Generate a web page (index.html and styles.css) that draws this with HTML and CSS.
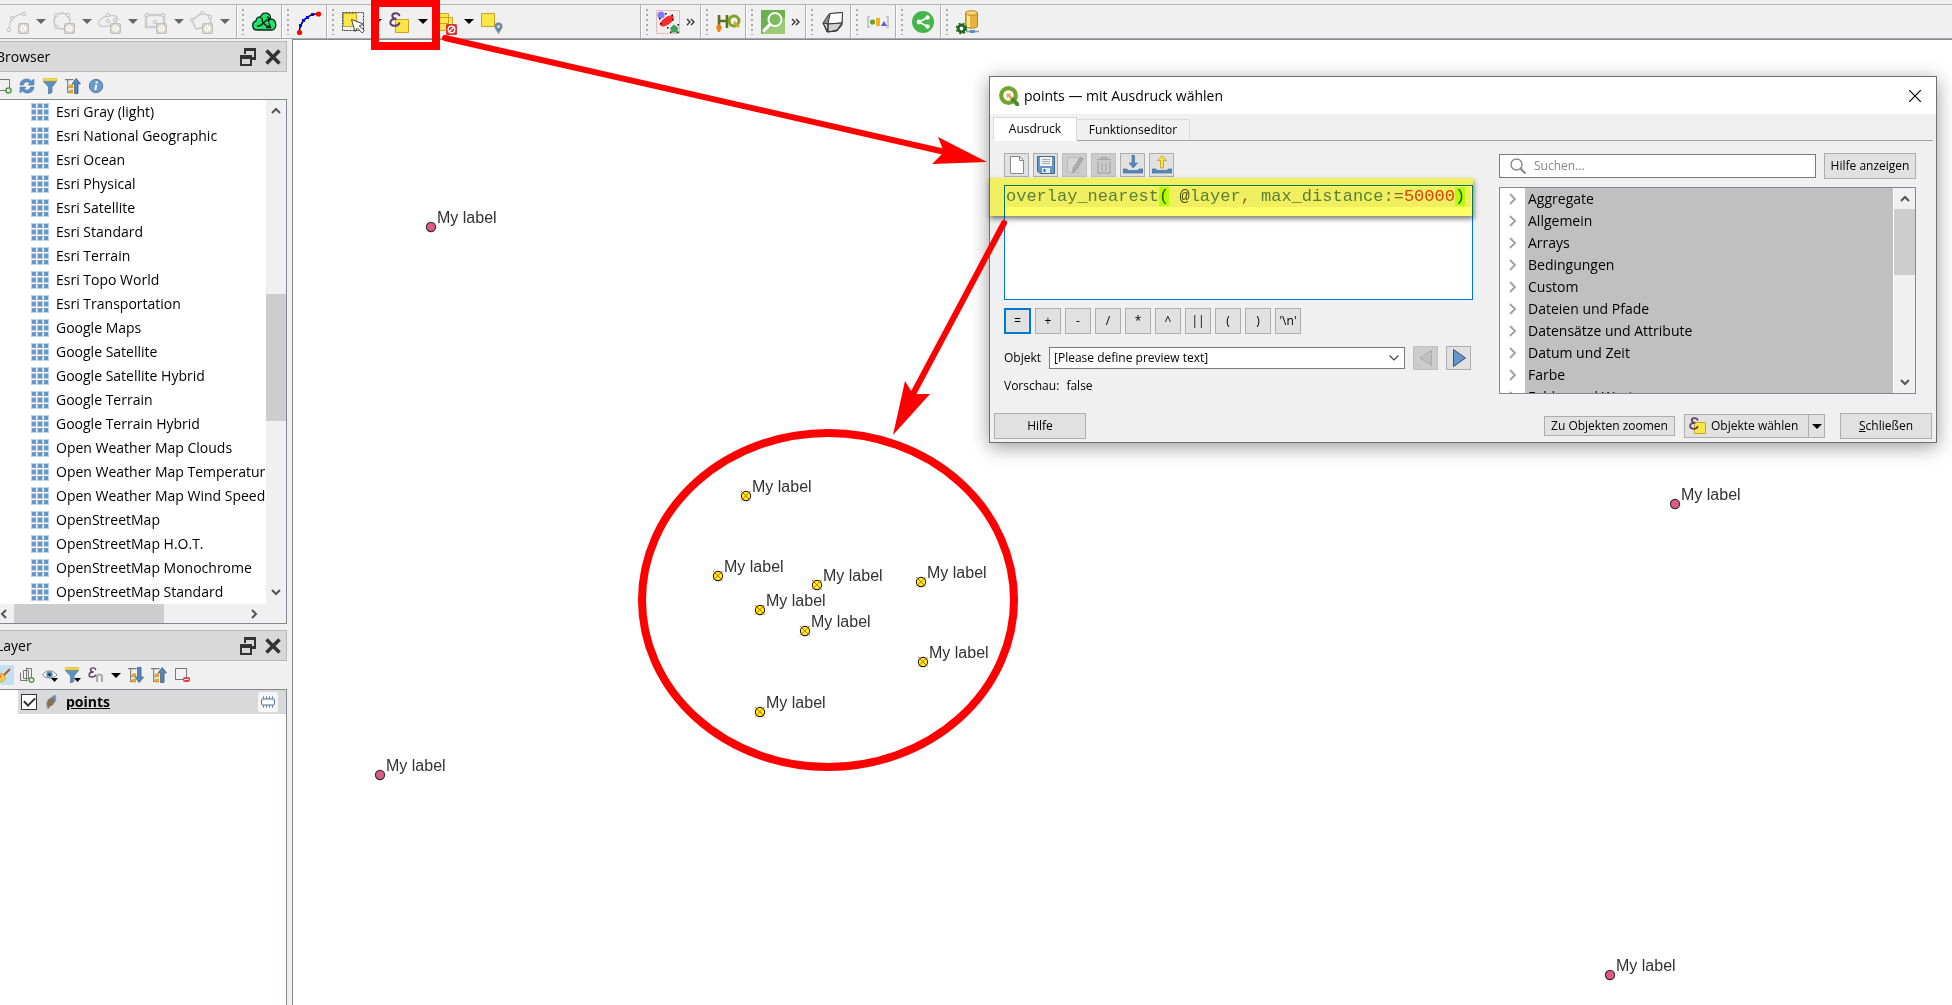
FILE: index.html
```
<!DOCTYPE html>
<html lang="de">
<head>
    <meta charset="UTF-8">
    <meta name="viewport" content="width=device-width, initial-scale=1.0">
    <title>QGIS</title>

    <link rel="stylesheet" href="styles.css">
</head>
<body>
    <!-- shared icons -->
    <svg class="defs" aria-hidden="true">
        <symbol id="tiles" viewBox="0 0 18 18">
            <path fill="#b9cfe6" d="M0 0h5v5H0zM6 0h6v5H6zM13 0h5v5h-5zM0 6h5v6H0zM6 6h6v6H6zM13 6h5v6h-5zM0 13h5v5H0zM6 13h6v5H6zM13 13h5v5h-5z"/>
            <path fill="#6796c8" d="M1 1h4v4H1zM7 1h4v4H7zM13 1h4v4h-4zM1 7h4v4H1zM7 7h4v4H7zM13 7h4v4h-4zM1 13h4v4H1zM7 13h4v4H7zM13 13h4v4h-4z"/>
        </symbol>
        <symbol id="undock" viewBox="0 0 16 18">
            <path fill="#333" fill-rule="evenodd" d="M4 0h12v12h-4V9h2V3H6v3H4zM0 7h12v11H0zm2 4v5h8v-5z"/>
        </symbol>
        <symbol id="cross" viewBox="0 0 16 16">
            <path fill="none" stroke="#333" stroke-width="3.6" d="M1.500 1.500l13 13M14.500 1.500l-13 13"/>
        </symbol>
        <symbol id="up" viewBox="0 0 10 7"><path fill="none" stroke="#555" stroke-width="2" d="M1 6l4-4 4 4"/></symbol>
        <symbol id="down" viewBox="0 0 10 7"><path fill="none" stroke="#555" stroke-width="2" d="M1 1l4 4 4-4"/></symbol>
        <symbol id="left" viewBox="0 0 7 10"><path fill="none" stroke="#555" stroke-width="2" d="M6 1L2 5l4 4"/></symbol>
        <symbol id="right" viewBox="0 0 7 10"><path fill="none" stroke="#555" stroke-width="2" d="M1 1l4 4-4 4"/></symbol>
        <symbol id="twist" viewBox="0 0 8 12"><path fill="none" stroke="#a3a3a3" stroke-width="2" d="M1 1l5 5-5 5"/></symbol>
        <symbol id="star" viewBox="0 0 11 11">
            <rect x=".5" y=".5" width="10" height="10" rx="1" fill="#d2d0c5" stroke="#c0bfb8"/>
            <path stroke="#fff" stroke-width="1.300" d="M5.500 1.500v8M1.500 5.500h8M2.700 2.700l5.600 5.600M8.300 2.700L2.700 8.300"/>
            <circle cx="5.500" cy="5.500" r="1" fill="#d2d0c5"/>
        </symbol>
        <symbol id="epsilon" viewBox="0 0 11 14">
            <path fill="none" stroke="#5d3f68" stroke-width="1.900" stroke-linecap="round" d="M9.500 3C8.500.5 3 .3 3 3.500 3 5.500 5 6.300 7 6.300 4 6.300 1.200 7.300 1.200 9.800c0 4 7 3.800 8.300.7"/>
        </symbol>
        <symbol id="funnel" viewBox="0 0 14 16">
            <path fill="#5f8fc2" stroke="#4873a0" stroke-width=".7" d="M.5 3.500h13L9 9v5.500L5.500 16V9z"/>
            <path fill="#f8df3c" stroke="#c9a91c" stroke-width=".6" d="M.4.400h13.200v2.500H.4z"/>
        </symbol>
        <symbol id="tree-up" viewBox="0 0 15 15">
            <path fill="none" stroke="#777" d="M0 1.500h8M2.500 1v12.500M2 8.500h3M2 13.500h3"/>
            <rect x="4" y="6" width="3.500" height="3.500" fill="#f0a020"/><rect x="4" y="11" width="3.500" height="3.500" fill="#f0a020"/>
            <path fill="#5788bd" stroke="#2f5580" stroke-width=".7" d="M10.500.5l4 5h-2.300v9H9v-9H6.700z"/>
        </symbol>
        <symbol id="tree-down" viewBox="0 0 15 15">
            <path fill="none" stroke="#777" d="M0 1.500h8M2.500 1v12.500M2 8.500h3M2 13.500h3"/>
            <rect x="4" y="6" width="3.500" height="3.500" fill="#f0a020"/><rect x="4" y="11" width="3.500" height="3.500" fill="#f0a020"/>
            <path fill="#5788bd" stroke="#2f5580" stroke-width=".7" d="M10.500 14.500l4-5h-2.300v-9H9v9H6.700z"/>
        </symbol>
        <symbol id="hit" viewBox="0 0 12 12">
            <circle cx="6" cy="6" r="4.600" fill="#ff0" stroke="#222" stroke-width="1.100"/>
            <path stroke="#f5301f" stroke-width=".9" d="M1 1l9.500 9.500M10.500 1L1 10.500"/>
        </symbol>
        <symbol id="miss" viewBox="0 0 12 12">
            <circle cx="6" cy="6" r="4.600" fill="#e15989" stroke="#333" stroke-width="1.200"/>
        </symbol>
    </svg>

    <div class="window">
        <div class="strip"></div>

        <div class="toolbar">
            <div class="group first">
                <button class="tool menu off" aria-label="Kreisbogen"><svg viewBox="0 0 24 24"><path fill="none" stroke="#cdcdcd" stroke-width="1.500" d="M3 20C3 11 8 4 18 4"/><g fill="#eee" stroke="#c3c3c3"><circle cx="3" cy="20" r="1.700"/><circle cx="6" cy="8" r="1.700"/><circle cx="18" cy="4" r="1.700"/></g><use href="#star" x="12" y="13" width="11" height="11"/></svg></button>
                <button class="tool menu off" aria-label="Kreis"><svg viewBox="0 0 24 24"><circle cx="10" cy="11" r="8" fill="none" stroke="#cdcdcd" stroke-width="2"/><g fill="#eee" stroke="#c3c3c3"><circle cx="4" cy="5" r="1.700"/><circle cx="16" cy="5" r="1.700"/><circle cx="4" cy="17" r="1.700"/></g><use href="#star" x="12" y="13" width="11" height="11"/></svg></button>
                <button class="tool menu off" aria-label="Ellipse"><svg viewBox="0 0 24 24"><ellipse cx="10" cy="11" rx="10" ry="5" transform="rotate(-16 10 11)" fill="none" stroke="#cdcdcd" stroke-width="1.500"/><g fill="#eee" stroke="#c3c3c3"><circle cx="10" cy="11" r="1.700"/><circle cx="10" cy="5" r="1.700"/><circle cx="17" cy="10" r="1.700"/></g><use href="#star" x="12" y="13" width="11" height="11"/></svg></button>
                <button class="tool menu off" aria-label="Rechteck"><svg viewBox="0 0 24 24"><path fill="none" stroke="#cdcdcd" stroke-width="2.500" d="M2 5h18v12H2z"/><g fill="#eee" stroke="#c3c3c3"><circle cx="3" cy="5" r="1.700"/><circle cx="19" cy="5" r="1.700"/><circle cx="11" cy="12" r="1.700"/></g><use href="#star" x="12" y="13" width="11" height="11"/></svg></button>
                <button class="tool menu off" aria-label="Polygon"><svg viewBox="0 0 24 24"><path fill="none" stroke="#cdcdcd" stroke-width="1.800" d="M12 3L2 10l4 9 9-2 6-1-1-10z"/><g fill="#eee" stroke="#c3c3c3"><circle cx="12" cy="3" r="1.700"/><circle cx="2" cy="10" r="1.700"/><circle cx="20" cy="7" r="1.700"/></g><use href="#star" x="12" y="13" width="11" height="11"/></svg></button>
            </div>
            <div class="group">
                <button class="tool" aria-label="Cloud"><svg viewBox="0 0 24 24"><path fill="#21e56b" stroke="#10241a" stroke-width="1.300" d="M5 20C-.5 20-.5 12 4 11c0-3 3-5 4.500-3.500C10 1 19 2 18.500 9c6.500-.5 7 11 1.500 11z"/><path fill="none" stroke="#10241a" stroke-width="1.400" d="M5 16c6 1 7-7 13-7M10 8c0 5 3 8 8 9M15 6.500l3 2.500-2 3M14 17.500h4.500L17 13"/></svg></button>
            </div>
            <div class="group">
                <button class="tool" aria-label="Bogen digitalisieren"><svg viewBox="0 0 24 24"><path fill="none" stroke="#000" stroke-width="1.500" d="M2 23C3 12 10 4 21 4"/><g fill="#00f"><path d="M2 14h3v3H2zM5 9h3v3H5zM9 6h3v3H9zM14 3h3v3h-3z"/></g><g fill="red"><circle cx="2.500" cy="22.500" r="2.600"/><circle cx="21.500" cy="4" r="2.600"/></g></svg></button>
            </div>
            <div class="group wide">
                <button class="tool menu" aria-label="Objekte wählen"><svg viewBox="0 0 24 24"><path fill="#fbe64a" stroke="#c8a51e" d="M1.500 3.500h13v13h-13z"/><path fill="none" stroke="#333" stroke-dasharray="2 1" d="M.5 2.500h21v18H.5z"/><path fill="#fff" stroke="#444" d="M9.500 9.500l3.500 12 2.300-3.500 5 5 2-2.500-5-4.500 4-2z"/></svg></button>
                <button class="tool menu" aria-label="Mit Ausdruck wählen"><svg viewBox="0 0 24 24"><path fill="#fbe64a" stroke="#c8a51e" d="M7.500 9.500h13v13h-13z"/><use href="#epsilon" x="1" y="2" width="12" height="15"/></svg></button>
                <button class="tool menu" aria-label="Auswahl aufheben"><svg viewBox="0 0 24 24"><path fill="#fbe64a" stroke="#c8a51e" d="M1.500 3.500h13v10h-13zM5.500 7.500h13v13h-13z"/><rect x="12" y="14" width="11" height="11" rx="1.500" fill="#d92f35"/><circle cx="17.500" cy="19.500" r="3.300" fill="none" stroke="#fff" stroke-width="1.300"/><path stroke="#fff" stroke-width="1.300" d="M15.300 21.700l4.400-4.400"/></svg></button>
                <button class="tool" aria-label="Nach Position wählen"><svg viewBox="0 0 24 24"><path fill="#fbe64a" stroke="#c8a51e" d="M1.500 3.500h13v13h-13z"/><path fill="#6d8ba3" d="M18.500 24c-1.500-3-4-5-4-7.500a4 4 0 0 1 8 0c0 2.500-2.500 4.500-4 7.500z"/><circle cx="18.500" cy="16.500" r="1.500" fill="#dce6ee"/></svg></button>
            </div>
            <div class="group">
                <button class="tool" aria-label="Formen"><svg viewBox="0 0 24 24"><path fill="#f3eded" stroke="#e3bcbc" d="M.5.500h23v23H.5z"/><circle cx="5" cy="5" r="3.600" fill="#7d7df0"/><ellipse cx="11" cy="11" rx="8" ry="3.800" transform="rotate(-35 11 11)" fill="#ff2a2a"/><path fill="#3fa05a" d="M18 14.500l4.500 3.500-1.700 4.500h-5l-1.800-4.500z"/><path fill="#000" d="M9 3h1.500v1.500H9zM15.500 4.500H17V6h-1.500zM4 13h1.500v1.500H4zM11 17h1.500v1.500H11zM16 9h1.500v1.500H16zM21.500 14H23v1.500h-1.500zM21 21.500h1.500V23H21zM14 21.500h1.500V23H14zM3 8h1.500v1.500H3z"/></svg></button>
                <button class="more" aria-label="Mehr"><svg viewBox="0 0 9 8"><path fill="none" stroke="#333" stroke-width="1.400" d="M1 1l3 3-3 3M5 1l3 3-3 3"/></svg></button>
            </div>
            <div class="group">
                <button class="tool" aria-label="HQ"><svg viewBox="0 0 24 24"><path fill="none" stroke="#5b6f1e" stroke-width="2.600" d="M3 5v12M11 5v13M3 11h8"/><circle cx="18" cy="11" r="5" fill="none" stroke="#7ba428" stroke-width="3"/><path stroke="#d6a52c" stroke-width="2.500" d="M18 12l5 5"/><path fill="#f47c12" d="M0 17l3-3 3 3-2 5H2z"/></svg></button>
            </div>
            <div class="group">
                <button class="tool" aria-label="Suche"><svg viewBox="0 0 24 24"><path fill="#6ab14f" d="M0 0h24v24H0z"/><path fill="#9ccb74" d="M0 24L24 8v16z"/><circle cx="14" cy="9.500" r="6.500" fill="#7dbb5d" stroke="#fff" stroke-width="2"/><path stroke="#fff" stroke-width="3.200" stroke-linecap="round" d="M9 14.500l-6 6"/></svg></button>
                <button class="more" aria-label="Mehr"><svg viewBox="0 0 9 8"><path fill="none" stroke="#333" stroke-width="1.400" d="M1 1l3 3-3 3M5 1l3 3-3 3"/></svg></button>
            </div>
            <div class="group">
                <button class="tool" aria-label="3D"><svg viewBox="0 0 24 24"><path fill="#8d8d8d" stroke="#333" d="M2 13L8 4l13-1.500V15l-5 6-10 1z"/><path fill="#fff" stroke="#333" d="M9 3.500l12.500-1L21 13l-14 1z"/><path fill="#d0d0d0" stroke="#333" d="M7 14l14-1-5 7-9 2zM2 13l5 1v8z"/></svg></button>
            </div>
            <div class="group">
                <button class="tool" aria-label="Diagramm"><svg viewBox="0 0 24 24"><path fill="none" stroke="#bbb" stroke-width="1.500" d="M4 7H2v10h2M20 7h2v10h-2"/><circle cx="6.500" cy="12" r="2.600" fill="#5ba52e"/><path fill="#fbaf17" d="M10 8h4v8h-4z"/><path fill="#6b51dd" d="M15 16l3-5 3 5z"/></svg></button>
            </div>
            <div class="group">
                <button class="tool" aria-label="Teilen"><svg viewBox="0 0 24 24"><circle cx="12" cy="12" r="11" fill="#43b649"/><path fill="none" stroke="#fff" stroke-width="1.800" d="M16.500 7.500L8 12l8.500 4.500"/><g fill="#fff"><circle cx="8" cy="12" r="2.400"/><circle cx="16.500" cy="7.500" r="2.200"/><circle cx="16.500" cy="16.500" r="2.200"/></g></svg></button>
            </div>
            <div class="group last">
                <button class="tool" aria-label="Datenbank"><svg viewBox="0 0 24 24"><path fill="#e9b23a" stroke="#b98718" d="M9.500 3v13c0 3 12 3 12 0V3z"/><path fill="#ffe7a0" d="M11 4h3v13h-3z"/><ellipse cx="15.500" cy="3" rx="6" ry="2.300" fill="#f8d67c" stroke="#b98718"/><path stroke="#999" stroke-width="1.500" d="M10 21.500h13"/><path fill="#5c8fc4" d="M14 20h5v3h-5z"/><circle cx="5.500" cy="18.500" r="3.300" fill="#fff" stroke="#1d6a1d" stroke-width="2.800"/><circle cx="5.500" cy="18.500" r="5" fill="none" stroke="#1d6a1d" stroke-dasharray="2 2" stroke-width="1.500"/></svg></button>
            </div>
        </div>

        <div class="main">
            <div class="docks">
                <section class="dock browser">
                    <header class="dock-title">
                        <h2>Browser</h2>
                        <button class="plain" aria-label="Abdocken"><svg width="16" height="18"><use href="#undock"/></svg></button>
                        <button class="plain" aria-label="Schließen"><svg width="16" height="16"><use href="#cross"/></svg></button>
                    </header>
                    <div class="dock-tools">
                        <button class="plain" aria-label="Layer hinzufügen"><svg width="16" height="16" viewBox="0 0 16 16"><path fill="none" stroke="#777" d="M0 1.500h13.500v11H0"/><circle cx="12.500" cy="12.500" r="2.500" fill="#fff" stroke="#4e9a3e" stroke-width="1.500"/></svg></button>
                        <button class="plain" aria-label="Aktualisieren"><svg width="16" height="16" viewBox="0 0 16 16"><path fill="#5c8fc4" stroke="#3f6d9f" stroke-width=".5" d="M1 7C1 1 9-1 12.500 3L15 1v6H9l2-2C8 3 5 4 4.500 7zM15 9c0 6-8 8-11.500 4L1 15V9h6l-2 2c3 2 6 1 6.500-2z"/></svg></button>
                        <button class="plain" aria-label="Filter"><svg width="16" height="16"><use href="#funnel"/></svg></button>
                        <button class="plain" aria-label="Alles zuklappen"><svg width="16" height="16"><use href="#tree-up"/></svg></button>
                        <button class="plain" aria-label="Eigenschaften"><svg width="16" height="16" viewBox="0 0 16 16"><circle cx="8" cy="8" r="6.700" fill="#6c9aca" stroke="#4c7db3"/><path stroke="#fff" stroke-width="2" d="M8.800 3.500l-.3 2M8.300 6.800L7.300 12"/></svg></button>
                    </div>
                    <div class="list">
                        <ul class="sources">
                            <li><svg><use href="#tiles"/></svg>Esri Gray (light)</li>
                            <li><svg><use href="#tiles"/></svg>Esri National Geographic</li>
                            <li><svg><use href="#tiles"/></svg>Esri Ocean</li>
                            <li><svg><use href="#tiles"/></svg>Esri Physical</li>
                            <li><svg><use href="#tiles"/></svg>Esri Satellite</li>
                            <li><svg><use href="#tiles"/></svg>Esri Standard</li>
                            <li><svg><use href="#tiles"/></svg>Esri Terrain</li>
                            <li><svg><use href="#tiles"/></svg>Esri Topo World</li>
                            <li><svg><use href="#tiles"/></svg>Esri Transportation</li>
                            <li><svg><use href="#tiles"/></svg>Google Maps</li>
                            <li><svg><use href="#tiles"/></svg>Google Satellite</li>
                            <li><svg><use href="#tiles"/></svg>Google Satellite Hybrid</li>
                            <li><svg><use href="#tiles"/></svg>Google Terrain</li>
                            <li><svg><use href="#tiles"/></svg>Google Terrain Hybrid</li>
                            <li><svg><use href="#tiles"/></svg>Open Weather Map Clouds</li>
                            <li><svg><use href="#tiles"/></svg>Open Weather Map Temperature</li>
                            <li><svg><use href="#tiles"/></svg>Open Weather Map Wind Speed</li>
                            <li><svg><use href="#tiles"/></svg>OpenStreetMap</li>
                            <li><svg><use href="#tiles"/></svg>OpenStreetMap H.O.T.</li>
                            <li><svg><use href="#tiles"/></svg>OpenStreetMap Monochrome</li>
                            <li><svg><use href="#tiles"/></svg>OpenStreetMap Standard</li>
                        </ul>
                        <div class="vscroll">
                            <svg width="10" height="7"><use href="#up"/></svg>
                            <div class="track"><div class="thumb"></div></div>
                            <svg width="10" height="7"><use href="#down"/></svg>
                        </div>
                        <div class="hscroll">
                            <svg width="7" height="10"><use href="#left"/></svg>
                            <div class="track"><div class="thumb"></div></div>
                            <svg width="7" height="10"><use href="#right"/></svg>
                        </div>
                    </div>
                </section>

                <section class="dock layers">
                    <header class="dock-title">
                        <h2>Layer</h2>
                        <button class="plain" aria-label="Abdocken"><svg width="16" height="18"><use href="#undock"/></svg></button>
                        <button class="plain" aria-label="Schließen"><svg width="16" height="16"><use href="#cross"/></svg></button>
                    </header>
                    <div class="dock-tools">
                        <button class="plain on" aria-label="Layergestaltung"><svg width="16" height="16" viewBox="0 0 16 16"><path fill="#f7c948" stroke="#c3922a" stroke-width=".6" d="M1 8l5-2 4 5-3 4-5-1z"/><path fill="#e64b3c" d="M0 8l4-1 1 3-4 2z"/><path stroke="#b5562d" stroke-width="2" d="M8 8l6-6"/></svg></button>
                        <button class="plain" aria-label="Gruppe hinzufügen"><svg width="16" height="16" viewBox="0 0 16 16"><path fill="none" stroke="#777" d="M1.500 5.500v8h7M4.500 3.500h5v8h-5zM7.500 1.500h5v9M7.500.500v14"/><circle cx="12.500" cy="13" r="2.300" fill="#fff" stroke="#4e9a3e" stroke-width="1.500"/></svg></button>
                        <button class="plain" aria-label="Sichtbarkeit"><svg width="16" height="16" viewBox="0 0 16 16"><path fill="#fff" stroke="#888" d="M.5 8C4 2.500 11 2.500 15 8c-4 4-11 4-14.500 0z"/><circle cx="7.500" cy="7.500" r="3.300" fill="#5c8fc4"/><circle cx="7.500" cy="7.500" r="1.300" fill="#222"/><path d="M9 11h7l-3.500 4z"/></svg></button>
                        <button class="plain" aria-label="Legende filtern"><svg width="16" height="16" viewBox="0 0 16 16"><use href="#funnel" width="14" height="16"/><path d="M9 11h7l-3.500 4z"/></svg></button>
                        <button class="plain" aria-label="Mit Ausdruck filtern"><svg width="16" height="16" viewBox="0 0 16 16"><use href="#epsilon" width="9" height="11"/><path fill="none" stroke="#aaa" stroke-width="2" d="M9 15V9c0-2 5-2 5 0v6"/></svg></button>
                        <span class="caret"></span>
                        <button class="plain" aria-label="Alles aufklappen"><svg width="16" height="16"><use href="#tree-down"/></svg></button>
                        <button class="plain" aria-label="Alles zuklappen"><svg width="16" height="16"><use href="#tree-up"/></svg></button>
                        <button class="plain" aria-label="Layer entfernen"><svg width="16" height="16" viewBox="0 0 16 16"><path fill="#f3f3f3" stroke="#777" d="M1.500 1.500h11v11h-11z"/><rect x="9" y="10" width="7" height="5" rx="2" fill="#ef3e42"/><path stroke="#fff" d="M10.500 12.500h4"/></svg></button>
                    </div>
                    <div class="layer-list">
                        <div class="layer">
                            <input type="checkbox" id="layer-points" checked>
                            <svg class="blob" viewBox="0 0 14 16"><path fill="#6684a8" stroke="#8a97a8" d="M11 1c2 4 0 9-4 10l-3 4C2 10 2 6 7 4z"/><path fill="#8c6f4a" d="M4 6l6-1-1 6-5 2z"/></svg>
                            <label for="layer-points">points</label>
                            <span class="memory"><svg viewBox="0 0 14 12"><rect x=".6" y="3" width="12.800" height="6" rx="1" fill="#fff" stroke="#4d6f93"/><path stroke="#4d6f93" d="M2.500.5v2M5.500.5v2M8.500.5v2M11.500.5v2M2.500 9.500v2M5.500 9.500v2M8.500 9.500v2M11.500 9.500v2"/></svg></span>
                        </div>
                    </div>
                </section>
            </div>

            <div class="map">
                <div class="point" style="left:138px;top:187px"><svg><use href="#miss"/></svg><span>My label</span></div>
                <div class="point" style="left:1382px;top:464px"><svg><use href="#miss"/></svg><span>My label</span></div>
                <div class="point" style="left:87px;top:735px"><svg><use href="#miss"/></svg><span>My label</span></div>
                <div class="point" style="left:1317px;top:935px"><svg><use href="#miss"/></svg><span>My label</span></div>
                <div class="point" style="left:453px;top:456px"><svg><use href="#hit"/></svg><span>My label</span></div>
                <div class="point" style="left:425px;top:536px"><svg><use href="#hit"/></svg><span>My label</span></div>
                <div class="point" style="left:524px;top:545px"><svg><use href="#hit"/></svg><span>My label</span></div>
                <div class="point" style="left:628px;top:542px"><svg><use href="#hit"/></svg><span>My label</span></div>
                <div class="point" style="left:467px;top:570px"><svg><use href="#hit"/></svg><span>My label</span></div>
                <div class="point" style="left:512px;top:591px"><svg><use href="#hit"/></svg><span>My label</span></div>
                <div class="point" style="left:630px;top:622px"><svg><use href="#hit"/></svg><span>My label</span></div>
                <div class="point" style="left:467px;top:672px"><svg><use href="#hit"/></svg><span>My label</span></div>
            </div>
        </div>

        <div class="dialog" role="dialog" aria-labelledby="dialog-title">
            <header class="titlebar">
                <svg class="logo" viewBox="0 0 20 20"><circle cx="9.500" cy="9.500" r="7.300" fill="none" stroke="#72a52b" stroke-width="4.200"/><path fill="#4f8a2a" d="M11 13l3-2 6 6v3h-3z"/><path fill="#f0a040" d="M7.500 7.500h4.500l-1 1.500 2.500 2.500-1.700 1.700L9.300 10.700l-1.300 1.300z"/></svg>
                <h1 id="dialog-title">points — mit Ausdruck wählen</h1>
                <button class="plain" aria-label="Schließen"><svg width="12" height="12" viewBox="0 0 12 12"><path stroke="#000" stroke-width="1.200" d="M0 0l12 12M12 0L0 12"/></svg></button>
            </header>

            <div class="tabs" role="tablist">
                <button class="tab active" role="tab" aria-selected="true">Ausdruck</button>
                <button class="tab" role="tab" aria-selected="false">Funktionseditor</button>
            </div>

            <div class="content">
                <div class="expression">
                    <div class="file-tools">
                        <button class="square" aria-label="Neu"><svg viewBox="0 0 20 20"><path fill="#fff" stroke="#888" d="M3.500 1.500h9l4 4v13h-13z"/><path fill="none" stroke="#888" d="M12.500 1.500v4h4"/></svg></button>
                        <button class="square" aria-label="Speichern"><svg viewBox="0 0 20 20"><path fill="#6796c8" stroke="#44678c" d="M1.500 1.500h17v17H4l-2.500-2.500z"/><path fill="#f2f2f2" d="M4 2h12v9H4z"/><path stroke="#aaa" d="M6 4.500h8M6 6.500h8M6 8.500h8"/><path fill="#e8eef5" d="M6 13h8v5H6z"/><path fill="#44678c" d="M7.500 14h2v3h-2z"/></svg></button>
                        <button class="square" aria-label="Bearbeiten" disabled><svg viewBox="0 0 20 20"><path fill="#d5d5d5" stroke="#bbb" d="M2.500 2.500h11v15h-11z"/><path fill="#b0b0b0" stroke="#999" d="M15.500 2.500l2.500 1.500-7 11-3 2.500v-4z"/></svg></button>
                        <button class="square" aria-label="Löschen" disabled><svg viewBox="0 0 20 20"><path fill="none" stroke="#aaa" stroke-width="1.500" d="M4 6.500v11.500h12V6.500M8 8v8M12 8v8M3 4.500h14M7.500 4V2.500h5V4"/></svg></button>
                        <button class="square" aria-label="Importieren"><svg viewBox="0 0 20 20"><path fill="#5788bd" stroke="#44678c" stroke-width=".6" d="M9 0h2.500v8h3L10.200 13 6 8h3z"/><path fill="#5788bd" stroke="#44678c" stroke-width=".6" d="M0 14h4l1 1.500h10l1-1.500h4v4H0z"/></svg></button>
                        <button class="square" aria-label="Exportieren"><svg viewBox="0 0 20 20"><path fill="#fbe04a" stroke="#c39d1c" stroke-width=".8" d="M8.500 13h3V5.500h3L10 .7 5.500 5.500h3z"/><path fill="#5788bd" stroke="#44678c" stroke-width=".6" d="M0 14h4l1 1.500h10l1-1.500h4v4H0z"/></svg></button>
                    </div>
                    <div class="editor" contenteditable="true" role="textbox" aria-label="Ausdruck" spellcheck="false"><div class="line"><span class="fn">overlay_nearest</span><span class="brace">(</span> <span class="at">@</span><span class="fn">layer</span><span class="op">,</span> <span class="fn">max_distance</span><span class="op">:=</span><span class="num">50000</span><span class="brace">)</span></div></div>
                    <div class="operators">
                        <button class="focus">=</button>
                        <button>+</button>
                        <button>-</button>
                        <button>/</button>
                        <button>*</button>
                        <button>^</button>
                        <button>||</button>
                        <button>(</button>
                        <button>)</button>
                        <button>'\n'</button>
                    </div>
                    <div class="preview">
                        <label for="feature">Objekt</label>
                        <div class="combo">
                            <select id="feature"><option>[Please define preview text]</option></select>
                            <svg viewBox="0 0 10 6"><path fill="none" stroke="#444" stroke-width="1.200" d="M.5.500L5 5 9.500.5"/></svg>
                        </div>
                        <button class="square" aria-label="Vorheriges" disabled><svg viewBox="0 0 20 20"><path fill="#c0c0c0" stroke="#aaa" d="M15.500 2.500v15L4 10z"/></svg></button>
                        <button class="square" aria-label="Nächstes"><svg viewBox="0 0 20 20"><path fill="#6796c8" stroke="#30527c" d="M4.500 1.500v17L16.500 10z"/></svg></button>
                    </div>
                    <p class="result">Vorschau: <span>false</span></p>
                </div>

                <div class="functions">
                    <div class="find">
                        <div class="search">
                            <svg viewBox="0 0 16 16"><circle cx="6.500" cy="6.500" r="5.500" fill="none" stroke="#888" stroke-width="1.400"/><path stroke="#888" stroke-width="2.200" d="M10.500 10.500l5 5"/></svg>
                            <input type="text" placeholder="Suchen..." aria-label="Suchen">
                        </div>
                        <button class="push">Hilfe anzeigen</button>
                    </div>
                    <div class="tree">
                        <ul>
                            <li><svg><use href="#twist"/></svg>Aggregate</li>
                            <li><svg><use href="#twist"/></svg>Allgemein</li>
                            <li><svg><use href="#twist"/></svg>Arrays</li>
                            <li><svg><use href="#twist"/></svg>Bedingungen</li>
                            <li><svg><use href="#twist"/></svg>Custom</li>
                            <li><svg><use href="#twist"/></svg>Dateien und Pfade</li>
                            <li><svg><use href="#twist"/></svg>Datensätze und Attribute</li>
                            <li><svg><use href="#twist"/></svg>Datum und Zeit</li>
                            <li><svg><use href="#twist"/></svg>Farbe</li>
                            <li><svg><use href="#twist"/></svg>Felder und Werte</li>
                        </ul>
                        <div class="vscroll">
                            <svg width="10" height="7"><use href="#up"/></svg>
                            <div class="track"><div class="thumb"></div></div>
                            <svg width="10" height="7"><use href="#down"/></svg>
                        </div>
                    </div>
                </div>
            </div>

            <footer class="actions">
                <button class="push wide">Hilfe</button>
                <span class="spacer"></span>
                <button class="push small">Zu Objekten zoomen</button>
                <div class="split">
                    <button class="split-main"><svg viewBox="0 0 18 18"><path fill="#fbe64a" stroke="#c8a51e" d="M5.500 5.500h11v11h-11z"/><use href="#epsilon" x="0" y="0" width="10" height="13"/></svg>Objekte wählen</button>
                    <button class="split-menu" aria-label="Weitere"><span class="caret"></span></button>
                </div>
                <button class="push wide"><u>S</u>chließen</button>
            </footer>

            <div class="marker"></div>
        </div>

        <!-- red annotations -->
        <svg class="notes" aria-hidden="true">
            <rect x="375" y="3" width="61" height="43" fill="none" stroke="red" stroke-width="8"/>
            <g fill="none" stroke="red" stroke-width="6" stroke-linecap="round">
                <path d="M445 38l500 114"/>
                <path d="M1004 223l-91 171"/>
            </g>
            <path fill="red" d="M987 162l-49-25 6 15-12 12z"/>
            <path fill="red" d="M893 435l12-54 8 13 17 0z"/>
            <ellipse cx="828" cy="600" rx="186" ry="167" fill="none" stroke="red" stroke-width="8"/>
        </svg>
    </div>
</body>
</html>
```
FILE: styles.css
```
*{
    margin: 0;
    padding: 0;
    box-sizing: border-box;
}

body{
    background: #f0f0f0;
    color: #000;
    font-family: 'Open Sans', 'Noto Sans', sans-serif;
    font-size: 14px;
    line-height: 18px;
}

button, input, select{
    font: inherit;
    color: inherit;
}

button{
    border: 0;
    background: none;
}

svg{
    display: block;
    flex: none;
}

ul{
    list-style: none;
}

.defs{
    position: absolute;
    width: 0;
    height: 0;
}

.window{
    position: relative;
    display: flex;
    flex-direction: column;
    height: 100vh;
    overflow: hidden;
}

/* toolbar */
.strip{
    flex: none;
    height: 5px;
    border-bottom: 1px solid #b4b4b4;
}

.toolbar{
    flex: none;
    display: flex;
    height: 34px;
    border-bottom: 1px solid #a8a8a8;
}

.group{
    display: flex;
    align-items: center;
    padding: 0 5px 0 4px;
    border-left: 1px solid #fff;
    border-right: 1px solid #b0b0b0;
}

.group::before{
    content: "";
    width: 3px;
    height: 26px;
    margin-right: 7px;
    background: radial-gradient(circle at 1px 1px, #aaa 1px, transparent 1px) 0 0 / 3px 5px;
}

.group.first{
    padding: 0 0 0 6px;
    border-left: 0;
}

.group.first::before{
    display: none;
}

.group.wide{
    width: 314px;
}

.group.last{
    border-right: 0;
}

.tool{
    display: flex;
    align-items: center;
    width: 24px;
}

.tool svg{
    width: 24px;
    height: 24px;
    overflow: visible;
}

.tool.menu{
    width: 46px;
}

.tool.menu::after, .caret{
    content: "";
    border: 5px solid transparent;
    border-top-color: #000;
    border-bottom: 0;
}

.tool.menu::after{
    margin-left: 6px;
}

.tool.off::after{
    border-top-color: #666;
}

.more svg{
    width: 9px;
    height: 8px;
    margin-left: 6px;
}

/* docks */
.main{
    flex: 1;
    display: flex;
    min-height: 0;
}

.docks{
    flex: none;
    display: flex;
    flex-direction: column;
    gap: 6px;
    width: 292px;
    padding: 2px 5px 0 0;
}

.dock{
    display: flex;
    flex-direction: column;
}

.layers{
    flex: 1;
}

.dock-title{
    display: flex;
    align-items: center;
    gap: 9px;
    height: 31px;
    padding: 0 5px 0 0;
    background: #d9d9d9;
    border: 1px solid #b8b8b8;
    border-left: 0;
}

.dock-title h2{
    flex: 1;
    margin-left: -4px;
    font-size: 14px;
    font-weight: 400;
}

.dock-tools{
    display: flex;
    align-items: center;
    gap: 7px;
    height: 28px;
    margin-left: -4px;
}

.browser .dock-tools{
    height: 27px;
}

.plain.on{
    background: #c4e0f5;
    outline: 2px solid #c4e0f5;
}

.list{
    display: grid;
    grid-template-columns: 1fr 20px;
    background: #fff;
    border: 1px solid #828790;
    border-left: 0;
}

.sources{
    height: 504px;
    overflow: hidden;
}

.sources li{
    display: flex;
    align-items: center;
    gap: 7px;
    height: 24px;
    padding-left: 31px;
    white-space: nowrap;
}

.sources svg{
    width: 18px;
    height: 18px;
}

.vscroll{
    display: flex;
    flex-direction: column;
    align-items: center;
    padding: 7px 0;
    background: #f0f0f0;
}

.hscroll{
    display: flex;
    align-items: center;
    justify-content: space-between;
    height: 19px;
    padding: 0 8px 0 0;
    background: #f0f0f0;
}

.list .vscroll{
    grid-row: 1 / 3;
    grid-column: 2;
    padding-bottom: 27px;
}

.track{
    flex: 1;
    display: flex;
    width: 100%;
}

.vscroll .track{
    flex-direction: column;
    margin: 7px 0;
}

.hscroll .track{
    height: 100%;
    margin: 0 7px;
}

.thumb{
    background: #cdcdcd;
}

.list .vscroll .thumb{
    height: 127px;
    margin-top: 173px;
}

.hscroll .thumb{
    width: 150px;
}

.layer-list{
    flex: 1;
    background: #fff;
    border: 1px solid #828790;
    border-width: 1px 1px 0 0;
}

.layer{
    display: flex;
    align-items: center;
    height: 24px;
    margin-left: 18px;
    padding: 0 8px 0 3px;
    background: #d9d9d9;
}

.layer input{
    appearance: none;
    display: flex;
    justify-content: center;
    width: 16px;
    height: 16px;
    background: #fff;
    border: 1px solid #333;
}

.layer input:checked::after{
    content: "";
    width: 5px;
    height: 9px;
    border: solid #333;
    border-width: 0 2px 2px 0;
    transform: rotate(45deg);
}

.blob{
    width: 14px;
    height: 16px;
    margin: 0 8px 0 7px;
}

.layer label{
    flex: 1;
    font-weight: 700;
    text-decoration: underline;
}

.memory{
    display: flex;
    align-items: center;
    justify-content: center;
    width: 20px;
    height: 20px;
    border-radius: 2px;
    background: #f5f5f5;
}

.memory svg{
    width: 14px;
    height: 12px;
}

/* map */
.map{
    position: relative;
    flex: 1;
    background: #fff;
    border: 1px solid #828790;
    border-width: 1px 0 0 1px;
}

.point{
    position: absolute;
    display: flex;
    align-items: flex-end;
    height: 24px;
    margin: -18px 0 0 -6px;
    color: #323232;
    font-family: 'Liberation Sans', Arial, sans-serif;
    font-size: 16px;
    white-space: nowrap;
}

.point svg{
    width: 12px;
    height: 12px;
}

.point span{
    padding-bottom: 6px;
}

.notes{
    position: absolute;
    inset: 0;
    width: 100%;
    height: 100%;
    pointer-events: none;
}

/* expression dialog */
.dialog{
    position: absolute;
    top: 76px;
    right: 15px;
    width: 948px;
    background: #f0f0f0;
    border: 1px solid #6e6e6e;
    box-shadow: 0 4px 18px rgba(0, 0, 0, 0.4);
    font-size: 12px;
}

.titlebar{
    display: flex;
    align-items: center;
    gap: 5px;
    height: 37px;
    padding: 0 15px 0 9px;
    background: #fff;
}

.logo{
    width: 20px;
    height: 20px;
}

.titlebar h1{
    flex: 1;
    font-size: 14px;
    font-weight: 400;
}

.tabs{
    display: flex;
    align-items: flex-end;
    height: 27px;
    margin: 0 3px;
    box-shadow: inset 0 -1px #a0a0a0;
}

.tab{
    width: 113px;
    height: 22px;
    border: 1px solid #d9d9d9;
    border-left: 0;
    border-bottom-color: #a0a0a0;
}

.tab.active{
    width: 84px;
    height: 24px;
    background: #fff;
    border: 1px solid #d9d9d9;
    border-bottom-color: #fff;
}

.content{
    display: grid;
    grid-template-columns: 469fr 417fr;
    gap: 26px;
    padding: 12px 20px 0 14px;
}

.file-tools{
    display: flex;
    gap: 4px;
}

.square{
    display: flex;
    align-items: center;
    justify-content: center;
    width: 25px;
    height: 24px;
    background: #e1e1e1;
    border: 1px solid #adadad;
}

.square:disabled{
    background: #cccccc;
    border-color: #bfbfbf;
}

.square svg{
    width: 20px;
    height: 20px;
}

.editor{
    height: 115px;
    margin-top: 8px;
    padding: 1px;
    background: #fff;
    border: 1px solid #0078d7;
    outline: 0;
    font-family: 'Liberation Mono', 'Courier New', monospace;
    font-size: 17px;
    line-height: 20px;
    white-space: pre;
}

.line{
    background: #efefef;
}

.fn{ color: #5c7f84; }
.at{ color: #4a4a20; }
.op{ color: #8a6a4a; }
.num{ color: #d8402c; }

.brace{
    background: #b4ff00;
    color: #2a5a20;
}

.operators{
    display: flex;
    gap: 4px;
    margin: 8px 0 12px;
}

.operators button{
    width: 26px;
    height: 26px;
    background: #e1e1e1;
    border: 1px solid #adadad;
}

.operators .focus{
    width: 27px;
    border: 2px solid #0078d7;
}

.preview{
    display: flex;
    align-items: center;
    gap: 8px;
    padding-right: 2px;
}

.combo{
    position: relative;
    flex: 1;
}

.combo select{
    appearance: none;
    display: block;
    width: 100%;
    height: 22px;
    padding: 0 4px;
    background: #fff;
    border: 1px solid #7a7a7a;
    border-radius: 0;
}

.combo svg{
    position: absolute;
    top: 8px;
    right: 6px;
    width: 10px;
    height: 6px;
}

.result{
    margin-top: 8px;
    line-height: 16px;
}

.result span{
    margin-left: 4px;
}

.functions{
    display: flex;
    flex-direction: column;
    gap: 8px;
}

.find{
    display: flex;
    align-items: center;
    gap: 8px;
}

.search{
    flex: 1;
    display: flex;
    align-items: center;
    gap: 8px;
    height: 24px;
    padding: 0 10px;
    background: #fff;
    border: 1px solid #7a7a7a;
}

.search svg{
    width: 16px;
    height: 16px;
}

.search input{
    flex: 1;
    border: 0;
    outline: 0;
    background: none;
}

.search input::placeholder{
    color: #858585;
}

.push{
    height: 26px;
    min-width: 92px;
    background: #e1e1e1;
    border: 1px solid #adadad;
}

.tree{
    flex: 1 1 0;
    display: flex;
    min-height: 0;
    overflow: hidden;
    border: 1px solid #828790;
    background: #fff;
    font-size: 14px;
}

.tree ul{
    flex: 1;
    height: 221px;
    background: linear-gradient(to right, #fff 25px, #c0c0c0 25px);
}

.tree li{
    display: flex;
    align-items: center;
    gap: 11px;
    height: 22px;
    padding-left: 9px;
}

.tree li svg{
    width: 8px;
    height: 12px;
}

.tree .vscroll{
    width: 22px;
    border-left: 1px solid #fff;
}

.tree .thumb{
    height: 66px;
}

.actions{
    display: flex;
    align-items: center;
    padding: 19px 4px 3px;
}

.spacer{
    flex: 1;
}

.push.small{
    height: 20px;
    min-width: 131px;
    line-height: 16px;
}

.split{
    display: flex;
    height: 24px;
    margin: 0 15px 0 9px;
    background: #e1e1e1;
    border: 1px solid #adadad;
}

.split-main{
    display: flex;
    align-items: center;
    gap: 4px;
    width: 124px;
    padding-left: 4px;
    border-right: 1px solid #adadad;
}

.split-main svg{
    width: 18px;
    height: 18px;
}

.split-menu{
    display: flex;
    align-items: center;
    justify-content: center;
    width: 15px;
}

/* text marker drawn over the expression */
.marker{
    position: absolute;
    top: 101px;
    left: -1px;
    width: 484px;
    height: 38px;
    background: #ffff66;
    box-shadow: 1px 3px 5px rgba(0, 0, 0, 0.5);
    mix-blend-mode: multiply;
    pointer-events: none;
}
```
